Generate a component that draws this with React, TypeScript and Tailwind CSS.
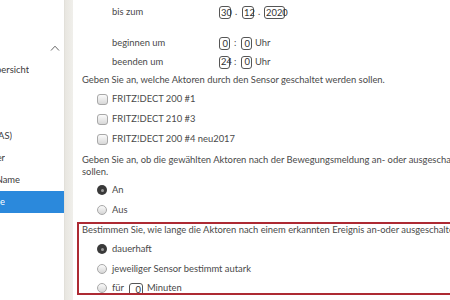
import React from "react";

function Box({ w, v, right }: { w: string; v: string; right?: boolean }) {
  return (
    <span
      className={
        "inline-flex h-[13px] items-center rounded-[3px] border border-[#555] bg-white px-[1px] leading-none text-[#333] " +
        w +
        (right ? " justify-end" : " justify-start")
      }
    >
      {v}
    </span>
  );
}

function Checkbox() {
  return (
    <span className="inline-block h-[11px] w-[11px] rounded-[3px] border border-[#a8a8a8] bg-gradient-to-b from-[#fafafa] to-[#d8d8d8]" />
  );
}

function Radio({ checked }: { checked?: boolean }) {
  return checked ? (
    <span className="inline-flex h-[10px] w-[10px] items-center justify-center rounded-full bg-[#3a3a3a]">
      <span className="h-[3px] w-[3px] rounded-full bg-[#9a9a9a]" />
    </span>
  ) : (
    <span className="inline-block h-[10px] w-[10px] rounded-full border border-[#a8a8a8] bg-gradient-to-b from-[#fafafa] to-[#d6d6d6]" />
  );
}

function SideItem({ label, w, active }: { label: string; w: string; active?: boolean }) {
  return (
    <div className={"flex h-[22px] items-center " + (active ? "bg-[#2b89dc] text-white" : "text-[#3a3a3a]")}>
      <div className={"flex justify-end overflow-hidden whitespace-nowrap " + w}>
        <span>{label}</span>
      </div>
    </div>
  );
}

export default function App() {
  return (
    <div className="flex h-[300px] w-[450px] overflow-hidden bg-white font-['Lato',sans-serif] text-[9.4px] text-[#4a4a4a]">
      {/* Sidebar */}
      <div className="flex w-[64px] shrink-0 flex-col pt-[37px]">
        <div className="flex h-[22px] items-center justify-end pr-[4px]">
          <svg width="10" height="6" viewBox="0 0 10 6" fill="none">
            <path d="M1 5.5 L5 1.2 L9 5.5" stroke="#666" strokeWidth="1" />
          </svg>
        </div>
        <SideItem label="Heimnetzübersicht" w="w-[29px]" />
        <div className="h-[22px]" />
        <div className="h-[22px]" />
        <SideItem label="Speicher (NAS)" w="w-[12px]" />
        <SideItem label="Mediaserver" w="w-[5px]" />
        <SideItem label="FRITZ!Box-Name" w="w-[20px]" />
        <SideItem label="Smart Home" w="w-[5px]" active />
      </div>

      {/* Separator */}
      <div className="w-[9px] shrink-0 border-l border-[#e2e0da] bg-gradient-to-r from-[#e8e6e0] to-[#f0efeb]" />

      {/* Main */}
      <div className="flex min-w-0 flex-1 flex-col whitespace-nowrap pl-[9px]">
        <div className="flex h-[25px] items-center">
          <span className="ml-[30px] w-[107px]">bis zum</span>
          <Box w="w-[12px]" v="30" />
          <span className="mx-[4px] w-[3px]">.</span>
          <Box w="w-[12px]" v="12" />
          <span className="mx-[4px] w-[2px]">.</span>
          <Box w="w-[21px]" v="2020" />
        </div>
        <div className="mt-[9px] flex h-[19px] items-center">
          <span className="ml-[30px] w-[107px]">beginnen um</span>
          <Box w="w-[11px]" v="0" right />
          <span className="mx-[4px] w-[3px]">:</span>
          <Box w="w-[11px]" v="0" right />
          <span className="ml-[3px]">Uhr</span>
        </div>
        <div className="flex h-[18px] items-center">
          <span className="ml-[30px] w-[107px]">beenden um</span>
          <Box w="w-[11px]" v="24" />
          <span className="mx-[4px] w-[3px]">:</span>
          <Box w="w-[11px]" v="0" right />
          <span className="ml-[3px]">Uhr</span>
        </div>
        <div className="flex h-[18px] items-center">
          Geben Sie an, welche Aktoren durch den Sensor geschaltet werden sollen.
        </div>
        {["FRITZ!DECT 200 #1", "FRITZ!DECT 210 #3", "FRITZ!DECT 200 #4 neu2017"].map((l) => (
          <div key={l} className="flex h-[20px] items-center pl-[15px]">
            <Checkbox />
            <span className="ml-[4px]">{l}</span>
          </div>
        ))}
        <div className="pt-[5px] leading-[12px]">
          Geben Sie an, ob die gewählten Aktoren nach der Bewegungsmeldung an- oder ausgeschaltet werden
          <br />
          sollen.
        </div>
        <div className="mt-[2px] flex h-[20px] items-center pl-[15px]">
          <Radio checked />
          <span className="ml-[5px]">An</span>
        </div>
        <div className="flex h-[20px] items-center pl-[15px]">
          <Radio />
          <span className="ml-[5px]">Aus</span>
        </div>

        <div className="-ml-[5px] mt-[2px] w-[420px] shrink-0 border-2 border-[#ad2a33] pl-[3px]">
          <div className="flex h-[12px] items-center">
            Bestimmen Sie, wie lange die Aktoren nach einem erkannten Ereignis an-oder ausgeschaltet werden sollen.
          </div>
          <div className="mt-[3px] flex h-[20px] items-center pl-[15px]">
            <Radio checked />
            <span className="ml-[5px]">dauerhaft</span>
          </div>
          <div className="flex h-[20px] items-center pl-[15px]">
            <Radio />
            <span className="ml-[5px]">jeweiliger Sensor bestimmt autark</span>
          </div>
          <div className="flex h-[14px] items-start overflow-hidden pl-[15px] pt-[4px]">
            <Radio />
            <span className="ml-[5px] leading-[10px]">für</span>
            <span className="ml-[5px]">
              <Box w="w-[14px]" v="0" right />
            </span>
            <span className="ml-[4px] leading-[10px]">Minuten</span>
          </div>
        </div>
      </div>
    </div>
  );
}
